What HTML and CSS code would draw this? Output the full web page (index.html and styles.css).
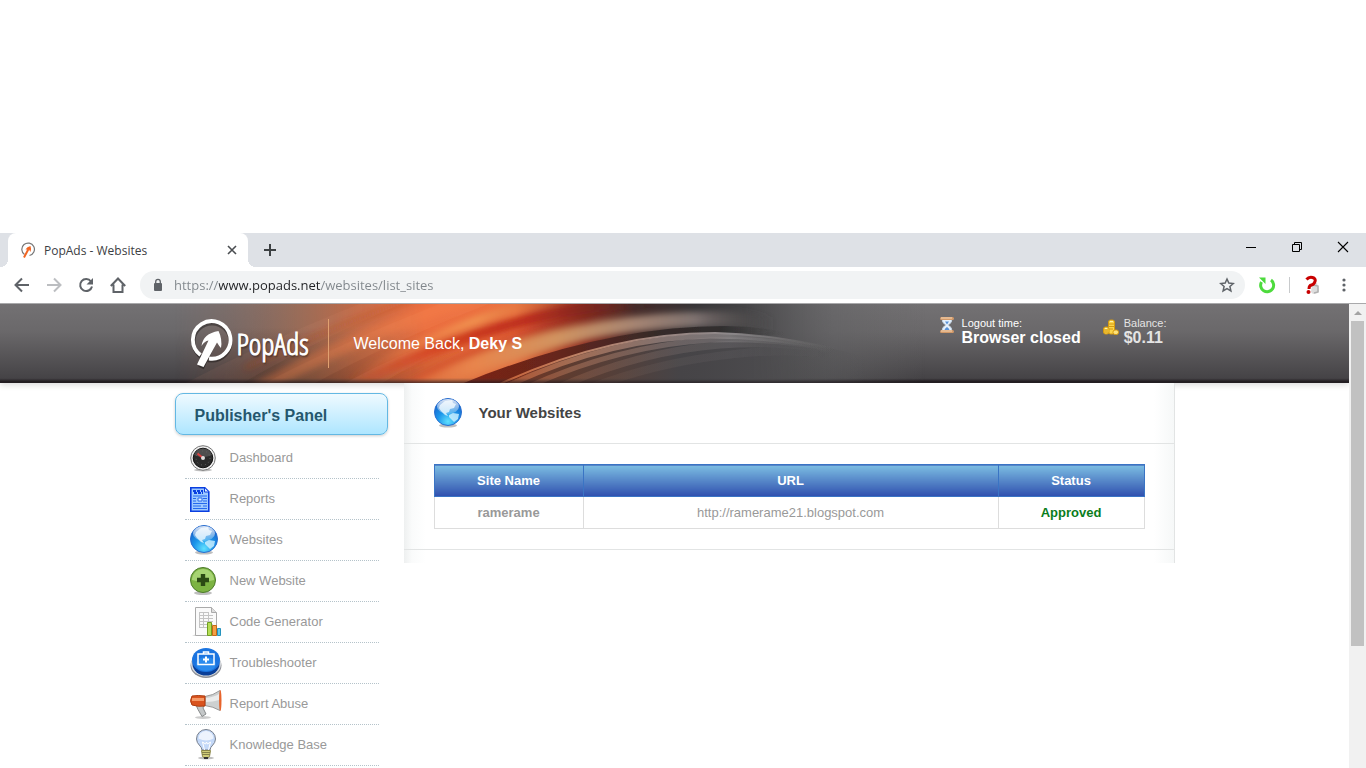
FILE: index.html
```html
<!DOCTYPE html>
<html lang="en">
<head>
  <meta charset="UTF-8" />
  <meta name="viewport" content="width=device-width, initial-scale=1" />
  <title>PopAds - Websites</title>
  <link rel="stylesheet" href="styles.css">
</head>
<body>

  <!-- Shared icon shapes -->
  <svg class="defs" width="0" height="0" aria-hidden="true">
    <defs>
      <radialGradient id="globeFill" cx="50%" cy="85%" r="85%">
        <stop offset="0" stop-color="#5fe0ff" />
        <stop offset=".45" stop-color="#1c96ea" />
        <stop offset="1" stop-color="#1558c4" />
      </radialGradient>
      <linearGradient id="globeShine" x1="0" y1="0" x2="0" y2="1">
        <stop offset="0" stop-color="#fff" stop-opacity=".85" />
        <stop offset="1" stop-color="#fff" stop-opacity=".2" />
      </linearGradient>
      <symbol id="globe" viewBox="0 0 32 32">
        <ellipse cx="14" cy="28.500" rx="9" ry="2" fill="#000" opacity=".25" />
        <circle cx="14" cy="15" r="13.500" fill="url(#globeFill)" stroke="#2a6fcf" />
        <path d="M6 8l5-4 7-1 1 3 3 1-2 4-4 1-1 3-3 1 2 3-3-1-4-4-2-3z" fill="#e4f6ff" opacity=".8" />
        <path d="M15 18l4-2 6 1-1 5-4 3-2-2-3-3z" fill="#d2f1ff" opacity=".8" />
        <ellipse cx="14" cy="9.500" rx="11" ry="7.500" fill="url(#globeShine)" />
      </symbol>
    </defs>
  </svg>

  <div class="tab-strip">
    <div class="tab">
      <svg class="favicon" viewBox="0 0 16 16" width="16" height="16" fill="none">
        <path d="M4.500 12.500a6.300 6.300 0 1 1 5 1" stroke="#777" stroke-width="1.200" />
        <path d="M4 15.500L8.500 7" stroke="#f26522" stroke-width="2" />
        <path d="M5.500 7.500q1.500-3 5-3.500 1 2.500 0 6L9 7.500z" fill="#f26522" />
      </svg>
      <span class="tab-title">PopAds - Websites</span>
      <button class="tab-close" aria-label="Close tab">
        <svg viewBox="0 0 16 16" width="16" height="16"><path d="M4 4l8 8M12 4l-8 8" stroke="#4a4d51" stroke-width="1.600" /></svg>
      </button>
    </div>
    <button class="new-tab" aria-label="New tab">
      <svg viewBox="0 0 16 16" width="16" height="16"><path d="M8 2v12M2 8h12" stroke="#3c4043" stroke-width="2" /></svg>
    </button>
    <div class="window-buttons">
      <button aria-label="Minimize"><svg viewBox="0 0 12 12" width="12" height="12"><path d="M1 6.500h10" stroke="#000" /></svg></button>
      <button aria-label="Restore"><svg viewBox="0 0 12 12" width="12" height="12" fill="none" stroke="#000"><path d="M1.500 3.500h7v7h-7zM3.500 3.500v-2h7v7h-2" /></svg></button>
      <button aria-label="Close"><svg viewBox="0 0 12 12" width="12" height="12"><path d="M1 1l10 10M11 1L1 11" stroke="#000" stroke-width="1.100" /></svg></button>
    </div>
  </div>

  <div class="toolbar">
    <button aria-label="Back"><svg viewBox="0 0 16 16" width="16" height="16" fill="none" stroke="#5f6368" stroke-width="2"><path d="M15 8H2.500M8 1.500L1.500 8 8 14.500" /></svg></button>
    <button aria-label="Forward"><svg viewBox="0 0 16 16" width="16" height="16" fill="none" stroke="#bcbec1" stroke-width="2"><path d="M1 8h12.500M8 1.500L14.500 8 8 14.500" /></svg></button>
    <button aria-label="Reload"><svg viewBox="0 0 16 16" width="16" height="16" fill="none"><path d="M13 4.500A6 6 0 1 0 14 9.500" stroke="#5f6368" stroke-width="2" /><path d="M15 1v6.500H8.500z" fill="#5f6368" /></svg></button>
    <button aria-label="Home"><svg viewBox="0 0 16 16" width="16" height="16" fill="none" stroke="#5f6368" stroke-width="2"><path d="M.8 9L8 1.500 15.200 9M3.500 7.500V15h9V7.500" /></svg></button>
    <div class="omnibox">
      <svg viewBox="0 0 12 14" width="12" height="14"><rect x="2" y="5" width="8" height="8" rx="1" fill="#5f6368" /><path d="M3.700 6V3.700a2.300 2.300 0 0 1 4.600 0V6" fill="none" stroke="#5f6368" stroke-width="1.300" /></svg>
      <input class="url" type="text" aria-label="Address" value="https://www.popads.net/websites/list_sites" />
      <button aria-label="Bookmark this page"><svg viewBox="0 0 16 16" width="16" height="16" fill="none" stroke="#5f6368" stroke-width="1.500"><path d="M8 2l1.800 4.100 4.500.4-3.400 3 1 4.400L8 11.600l-3.900 2.300 1-4.400-3.400-3 4.500-.4z" /></svg></button>
    </div>
    <button class="extension" aria-label="Refresh extension"><svg viewBox="0 0 18 18" width="18" height="18" fill="none"><path d="M3.500 6a6.500 6.500 0 1 0 9.500-2" stroke="#4ddb3d" stroke-width="3" /><path d="M1 1.500h6.500V8z" fill="#4ddb3d" /></svg></button>
    <span class="divider"></span>
    <button class="extension" aria-label="Help extension"><svg viewBox="0 0 18 20" width="18" height="20" fill="none"><path d="M9 9l5-1 2 8-1 2-5 1-2-2z" fill="#ddd" /><path d="M10 10l5 1v6l-4 1" stroke="#b0b0b0" stroke-width="1.500" /><path d="M3.500 4.500Q6 1.500 9.500 2.500t2.500 4-3.500 3.500-2.500 4" stroke="#c80000" stroke-width="3" /><circle cx="5.500" cy="17" r="2" fill="#c80000" /></svg></button>
    <button class="menu" aria-label="Menu"><svg viewBox="0 0 4 16" width="4" height="16" fill="#5f6368"><circle cx="2" cy="3" r="1.600" /><circle cx="2" cy="8" r="1.600" /><circle cx="2" cy="13" r="1.600" /></svg></button>
  </div>

  <div class="viewport">
    <div class="page">

      <header class="header">
        <div class="header-inner">
          <svg class="swoosh" viewBox="0 0 1000 79" width="1000" height="79" aria-hidden="true">
            <defs>
              <linearGradient id="warm">
                <stop offset="0" stop-color="#8a6a60" stop-opacity="0" />
                <stop offset=".05" stop-color="#8d6a5e" stop-opacity=".35" />
                <stop offset=".12" stop-color="#a56c52" stop-opacity=".75" />
                <stop offset=".18" stop-color="#c56a45" stop-opacity=".95" />
                <stop offset=".25" stop-color="#ea6c3e" />
                <stop offset=".34" stop-color="#ec7240" />
                <stop offset=".41" stop-color="#8a2c20" />
                <stop offset=".46" stop-color="#452a28" />
                <stop offset=".52" stop-color="#363436" />
                <stop offset=".57" stop-color="#454446" />
                <stop offset=".66" stop-color="#606062" stop-opacity=".5" />
                <stop offset=".75" stop-color="#666" stop-opacity="0" />
              </linearGradient>
              <linearGradient id="shade" x1="0" y1="0" x2="0" y2="1">
                <stop offset=".3" stop-color="#200800" stop-opacity="0" />
                <stop offset="1" stop-color="#200800" stop-opacity=".4" />
              </linearGradient>
              <linearGradient id="shadeFade">
                <stop offset="0" stop-color="#fff" stop-opacity="0" />
                <stop offset=".1" stop-color="#fff" />
                <stop offset=".25" stop-color="#fff" stop-opacity=".4" />
                <stop offset=".4" stop-color="#fff" stop-opacity="0" />
              </linearGradient>
              <mask id="leftMask"><rect width="1000" height="79" fill="url(#shadeFade)" /></mask>
              <linearGradient id="sand" gradientUnits="userSpaceOnUse" x1="200" y1="0" x2="600" y2="0">
                <stop offset="0" stop-color="#ef7a45" stop-opacity="0" />
                <stop offset=".25" stop-color="#e8854c" />
                <stop offset=".45" stop-color="#d2935f" />
                <stop offset=".65" stop-color="#a58472" />
                <stop offset=".8" stop-color="#7e7270" />
                <stop offset="1" stop-color="#444" stop-opacity="0" />
              </linearGradient>
              <linearGradient id="glow" gradientUnits="userSpaceOnUse" x1="180" y1="0" x2="420" y2="0">
                <stop offset="0" stop-color="#f5824a" stop-opacity="0" />
                <stop offset=".5" stop-color="#f09350" />
                <stop offset="1" stop-color="#c8552c" stop-opacity="0" />
              </linearGradient>
              <linearGradient id="redBand" gradientUnits="userSpaceOnUse" x1="160" y1="0" x2="480" y2="0">
                <stop offset="0" stop-color="#d84a28" stop-opacity="0" />
                <stop offset=".35" stop-color="#d2401f" />
                <stop offset=".6" stop-color="#bb2c1c" />
                <stop offset=".8" stop-color="#7a251d" />
                <stop offset="1" stop-color="#3a2726" stop-opacity="0" />
              </linearGradient>
              <linearGradient id="darkBand" gradientUnits="userSpaceOnUse" x1="285" y1="0" x2="610" y2="0">
                <stop offset="0" stop-color="#7d2413" />
                <stop offset=".3" stop-color="#66251c" />
                <stop offset=".6" stop-color="#362a28" />
                <stop offset=".8" stop-color="#302e2f" />
                <stop offset="1" stop-color="#444" stop-opacity="0" />
              </linearGradient>
              <linearGradient id="arc" gradientUnits="userSpaceOnUse" x1="310" y1="0" x2="660" y2="0">
                <stop offset="0" stop-color="#c8592c" />
                <stop offset=".25" stop-color="#c08264" />
                <stop offset=".5" stop-color="#9c8681" />
                <stop offset=".7" stop-color="#8d898b" />
                <stop offset="1" stop-color="#666" stop-opacity="0" />
              </linearGradient>
              <linearGradient id="under" gradientUnits="userSpaceOnUse" x1="320" y1="0" x2="690" y2="0">
                <stop offset="0" stop-color="#7d3420" />
                <stop offset=".2" stop-color="#5e3c30" />
                <stop offset=".5" stop-color="#464447" />
                <stop offset=".7" stop-color="#4c4b4e" stop-opacity=".8" />
                <stop offset="1" stop-color="#555" stop-opacity="0" />
              </linearGradient>
              <filter id="soft" filterUnits="userSpaceOnUse" x="-20" y="-60" width="1040" height="200"><feGaussianBlur stdDeviation="3" /></filter>
              <filter id="fine" filterUnits="userSpaceOnUse" x="-20" y="-60" width="1040" height="200"><feGaussianBlur stdDeviation=".7" /></filter>
            </defs>
            <rect width="1000" height="79" fill="url(#warm)" />
            <rect width="1000" height="79" fill="url(#shade)" mask="url(#leftMask)" />

            <!-- diagonal streaks on the left -->
            <g filter="url(#fine)" fill="#ffb080">
              <path d="M-10 90Q90 36 210 -10H250Q130 40 50 90z" opacity=".06" />
              <path d="M70 90Q160 40 290 -10H340Q220 34 120 90z" opacity=".08" />
              <path d="M150 90Q220 50 300 22L330 20Q240 56 190 90z" opacity=".1" />
            </g>
            <g fill="none" filter="url(#soft)">
              <path d="M70 64Q160 22 240 -6" stroke="#b23c20" stroke-width="4" opacity=".35" />
              <path d="M60 98Q190 24 300 -6" stroke="#f8824a" stroke-width="14" opacity=".35" />
              <path d="M160 86Q270 16 390 -8" stroke="url(#glow)" stroke-width="8" />
              <path d="M150 96Q290 18 450 -2" stroke="url(#redBand)" stroke-width="12" />
              <path d="M210 96Q330 20 480 2" stroke="url(#redBand)" stroke-width="8" opacity=".6" />
              <path d="M220 96Q370 16 540 15 580 15 620 26" stroke="url(#sand)" stroke-width="15" />
              <path d="M250 96Q380 24 500 18" stroke="url(#sand)" stroke-width="9" opacity=".7" />
            </g>

            <!-- dark gap and the arcs below it -->
            <path d="M272 86Q420 22 550 22 590 22 625 32 580 31 540 31 420 34 318 86z" fill="url(#darkBand)" filter="url(#fine)" />
            <path d="M318 86Q430 29 535 29 610 29 700 56L760 86z" fill="url(#under)" />
            <g fill="none" stroke="url(#arc)" filter="url(#fine)">
              <path d="M312 86Q430 29 540 29 600 30 660 46" stroke-width="2" />
              <path d="M324 86Q430 34 535 32 600 32 660 46" stroke-width="5" opacity=".7" />
              <path d="M346 86Q440 42 535 36 600 34 660 46" stroke-width="5" opacity=".45" />
              <path d="M378 86Q460 48 545 41 600 37 660 46" stroke-width="7" opacity=".22" />
              <path d="M410 86Q480 58 560 50 610 44 670 52" stroke-width="8" opacity=".1" />
            </g>
          </svg>

          <a class="logo" href="#">
            <svg viewBox="0 0 46 52" width="46" height="52" fill="none">
              <g opacity=".35" transform="translate(1 2)">
                <circle cx="22" cy="22" r="18.500" stroke="#000" stroke-width="4" />
                <path d="M11 48l10-21" stroke="#000" stroke-width="6" />
              </g>
              <path d="M11.500 37A18.800 18.800 0 1 1 20 40.500" stroke="#fff" stroke-width="3.800" />
              <path d="M8 46.500L19.500 22.500Q15.500 23 12.500 28 14 15.500 29.500 13 33.500 21 32 30 30 28 28 24.500L14.500 49z" fill="#fff" />
            </svg>
            <span>PopAds</span>
          </a>
          <p class="welcome">Welcome Back, <b>Deky S</b></p>

          <div class="stat">
            <svg viewBox="0 0 16 16" width="16" height="16">
              <path d="M3 2h10q0 4-4 6 4 2 4 6H3q0-4 4-6-4-2-4-6z" fill="#e6f1fc" stroke="#c3d3e3" />
              <path d="M6 4.500h4L8 7.500zM5 14q1-3 3-4 2 1 3 4z" fill="#5a93d8" />
              <rect x="1" y="0" width="14" height="3" rx="1.500" fill="#d39a69" />
              <rect x="1" y="13" width="14" height="3" rx="1.500" fill="#d39a69" />
              <path d="M2 1h11M2 14h11" stroke="#f6d8b8" />
            </svg>
            <p>Logout time:<b>Browser closed</b></p>
          </div>
          <div class="stat balance">
            <svg viewBox="0 0 16 16" width="16" height="16" stroke="#d59a10">
              <rect x="5.500" y="1" width="6" height="14" rx="2" fill="#fbd54a" />
              <rect x=".5" y="8" width="5.500" height="7" rx="2" fill="#fbd54a" />
              <rect x="10" y="11" width="5.500" height="4.500" rx="2" fill="#fde27a" />
              <path d="M6 5h5M6 7.500h5M6 10h4M1 11h4M1 13h4" />
              <path d="M7 2.500h3M2 9.500h2" stroke="#fff3b0" />
            </svg>
            <p>Balance:<b>$0.11</b></p>
          </div>
        </div>
      </header>

      <div class="container">
        <aside class="sidebar">
          <h2>Publisher's Panel</h2>
          <nav>
            <a href="#">
              <svg viewBox="0 0 32 32" width="32" height="32">
                <ellipse cx="13" cy="28" rx="9" ry="1.500" opacity=".25" />
                <circle cx="13" cy="16" r="12.300" fill="#eee" stroke="#777" />
                <circle cx="13" cy="16" r="9.800" fill="#2b2b2b" stroke="#111" />
                <path d="M4 13a9.500 9.500 0 0 1 18 0q-9 4-18 0z" fill="#666" opacity=".6" />
                <circle cx="13" cy="16" r="7" fill="none" stroke="#666" stroke-dasharray="1 3" />
                <path d="M7.500 11.500l6 5" stroke="#e04040" stroke-width="2" />
                <circle cx="13" cy="16" r="2" fill="#ddd" />
              </svg>
              <span>Dashboard</span>
            </a>
            <a href="#">
              <svg viewBox="0 0 32 32" width="32" height="32" fill="none" stroke="#0a3fe0">
                <path d="M.8 4.800h14l4 4v19.500H.8z" fill="#9ec9ff" stroke-width="1.600" />
                <path d="M14.500 5v4h4" fill="#e7f2ff" />
                <path d="M3 8h10M4 10h9" stroke-width="2" stroke-dasharray="3 1" />
                <path d="M3 13h14M3 15.500h3M13 15.500h4M3 18h3M13 18h4M3 20.500h14M3 23h8M13 23h4M3 25.500h14" stroke="#2468ee" />
                <path d="M8 15h4v3H8z" fill="#e7f2ff" stroke="#2468ee" />
              </svg>
              <span>Reports</span>
            </a>
            <a href="#">
              <svg viewBox="0 0 32 32" width="32" height="32"><use href="#globe" /></svg>
              <span>Websites</span>
            </a>
            <a href="#">
              <svg viewBox="0 0 32 32" width="32" height="32">
                <ellipse cx="13" cy="28" rx="9" ry="2" opacity=".25" />
                <circle cx="13" cy="15" r="12.500" fill="#7cb342" stroke="#4c7a2a" />
                <path d="M2 15a11 11 0 0 1 22 0q-11 3-22 0z" fill="#b5df84" opacity=".75" />
                <path d="M13 9v12M7 15h12" stroke="#2b4a14" stroke-width="4.400" />
              </svg>
              <span>New Website</span>
            </a>
            <a href="#">
              <svg viewBox="0 0 32 32" width="32" height="32">
                <path d="M2 30l4-2h20l3 2z" opacity=".15" />
                <path d="M5.500 1.500h16l5 5v23h-21z" fill="#fafafa" stroke="#aaa" />
                <path d="M21.500 1.500v5h5" fill="#ddd" stroke="#aaa" />
                <path d="M9 6.500h10M9 9.500h14M9 12.500h14M9 15.500h14M9 18.500h14M9 21.500h9M9.500 6v16M13.500 6v16M18.500 6v16" stroke="#c4c4c4" fill="none" />
                <path d="M17.500 16.500h4v13h-4z" fill="#b5dd55" stroke="#6fa022" />
                <path d="M22.500 19.500h4v10h-4z" fill="#f5a045" stroke="#c46a18" />
                <path d="M27.500 22.500h3v7h-3z" fill="#62cbee" stroke="#2593bd" />
              </svg>
              <span>Code Generator</span>
            </a>
            <a href="#">
              <svg viewBox="0 0 32 32" width="32" height="32" fill="none">
                <ellipse cx="16" cy="18.500" rx="15.500" ry="12.500" fill="#8c8f96" />
                <ellipse cx="16" cy="17" rx="15" ry="12.500" fill="#d8dbe0" />
                <ellipse cx="16" cy="17" rx="13.500" ry="11.500" fill="#0a3f98" />
                <ellipse cx="16" cy="13" rx="14" ry="12" fill="#1b74e0" />
                <ellipse cx="16" cy="17" rx="10" ry="7" fill="#359af5" opacity=".6" />
                <path d="M8 7h16v10.500H8z" stroke="#fff" stroke-width="1.500" />
                <path d="M13.500 7V5h5v2" stroke="#fff" stroke-width="1.500" />
                <path d="M16 9.500v6M13 12.500h6" stroke="#fff" stroke-width="2" />
              </svg>
              <span>Troubleshooter</span>
            </a>
            <a href="#">
              <svg viewBox="0 0 32 32" width="32" height="32">
                <ellipse cx="13" cy="29.500" rx="8" ry="1.500" opacity=".2" />
                <path d="M6 17h8l-1 3 3 6-4 2.500-4-7z" fill="#c4c7c8" stroke="#888b8c" />
                <path d="M15 8.500q8-1 15-6v20q-7-4-15-5z" fill="#cdd0d0" stroke="#999" />
                <path d="M16 10q8-1 13-4v6q-6 2-13 2z" fill="#fff" opacity=".6" />
                <path d="M2 8q6-1 13 0v10q-7 1-13-1-3-4 0-9z" fill="#d9531e" stroke="#ad3d10" />
                <path d="M2 10h12v3H2z" fill="#f59a68" />
                <ellipse cx="30.300" cy="12.500" rx="1.200" ry="10.500" fill="#e8642c" />
              </svg>
              <span>Report Abuse</span>
            </a>
            <a href="#">
              <svg viewBox="0 0 32 32" width="32" height="32">
                <ellipse cx="16" cy="29" rx="8" ry="1.500" opacity=".25" />
                <path d="M12 21c0-4-5.500-5.500-5.500-11a9.500 9.500 0 0 1 19 0C25.500 15.500 20 17 20 21z" fill="#c3d8f8" stroke="#777f8c" />
                <path d="M8.500 9.500a7.500 7.500 0 0 1 15 0q-7 4-15 0z" fill="#fff" opacity=".7" />
                <path d="M14.500 21l-2-8 3 2 1-2 1 2 3-2-2 8" fill="none" stroke="#fff" />
                <path d="M11.500 21.500h9l-1 6-2 1.500h-3l-2-1.500z" fill="#d0cd78" stroke="#8a8648" />
                <path d="M12 23.500h8M12 25.500h8" stroke="#85814a" />
                <path d="M14 29h4" stroke="#333" stroke-width="2" />
              </svg>
              <span>Knowledge Base</span>
            </a>
          </nav>
        </aside>

        <main class="content">
          <div class="content-title">
            <svg viewBox="0 0 32 32" width="32" height="32"><use href="#globe" /></svg>
            <h1>Your Websites</h1>
          </div>
          <div class="content-body">
            <table>
              <thead>
                <tr><th class="col-name">Site Name</th><th>URL</th><th class="col-status">Status</th></tr>
              </thead>
              <tbody>
                <tr><td class="site-name">ramerame</td><td>http://ramerame21.blogspot.com</td><td class="approved">Approved</td></tr>
              </tbody>
            </table>
          </div>
        </main>
      </div>
    </div>

    <div class="scrollbar">
      <svg viewBox="0 0 17 17" width="17" height="17"><path d="M5 11l4-4 4 4z" fill="#a3a3a3" /></svg>
      <div class="thumb"></div>
    </div>
  </div>

</body>
</html>
```
FILE: styles.css
```css
* {
  box-sizing: border-box;
}

body {
  margin: 0;
  padding-top: 233px;
  height: 100vh;
  overflow: hidden;
  display: flex;
  flex-direction: column;
  background-color: #fff;
  color: #999;
  font-family: Arial, "Liberation Sans", sans-serif;
  font-size: 13px;
}

h1, h2, p {
  margin: 0;
}

button {
  display: flex;
  align-items: center;
  justify-content: center;
  padding: 0;
  border: none;
  background: none;
  cursor: pointer;
}

a {
  color: inherit;
  text-decoration: none;
}

svg {
  flex: none;
}

.defs {
  position: absolute;
}

/* Browser tab strip */
.tab-strip {
  display: flex;
  flex: none;
  height: 34px;
  padding-left: 8px;
  background-color: #dee1e6;
}

.tab {
  position: relative;
  display: flex;
  align-items: center;
  gap: 8px;
  width: 240px;
  padding: 0 8px 0 12px;
  border-radius: 8px 8px 0 0;
  background-color: #fff;
  color: #3c4043;
  font-family: "Segoe UI", "Open Sans", sans-serif;
  font-size: 12px;
}

.tab::before,
.tab::after {
  content: "";
  position: absolute;
  bottom: 0;
  width: 8px;
  height: 8px;
}

.tab::before {
  left: -8px;
  background: radial-gradient(circle at 0 0, transparent 8px, #fff 8px);
}

.tab::after {
  right: -8px;
  background: radial-gradient(circle at 100% 0, transparent 8px, #fff 8px);
}

.tab-title {
  flex: 1;
}

.new-tab {
  width: 28px;
  margin-left: 8px;
}

.window-buttons {
  display: flex;
  height: 28px;
  margin-left: auto;
}

.window-buttons button {
  width: 46px;
}

/* Browser toolbar */
.toolbar {
  display: flex;
  flex: none;
  align-items: center;
  height: 37px;
  padding: 0 6px;
  border-bottom: 1px solid #a9a9ab;
}

.toolbar button {
  width: 32px;
  height: 28px;
}

.omnibox {
  display: flex;
  flex: 1;
  align-items: center;
  gap: 10px;
  height: 28px;
  margin: 0 6px;
  padding: 0 2px 0 12px;
  border-radius: 14px;
  background-color: #f1f3f4;
}

.url {
  flex: 1;
  padding: 0;
  border: none;
  outline: none;
  /* host name is darker than the rest of the address */
  background: linear-gradient(90deg, #80868b 45px, #202124 45px, #202124 147px, #80868b 147px);
  -webkit-background-clip: text;
  background-clip: text;
  color: transparent;
  font-family: "Segoe UI", "Open Sans", sans-serif;
  font-size: 13px;
}

.divider {
  width: 1px;
  height: 16px;
  margin: 0 6px;
  background-color: #c8cacc;
}

/* Page area */
.viewport {
  display: flex;
  flex: 1;
  min-height: 0;
}

.page {
  flex: 1;
  min-width: 0;
  overflow: hidden;
}

.header {
  background: linear-gradient(#737173, #6a686a 35%, #454346 94%, #231e22 98%);
  box-shadow: 0 2px 6px rgba(0, 0, 0, 0.15);
  color: #fff;
}

.header-inner {
  position: relative;
  display: flex;
  align-items: flex-start;
  max-width: 1000px;
  height: 79px;
  margin: 0 auto;
}

.swoosh {
  position: absolute;
  top: 0;
  left: 0;
  -webkit-mask-image: linear-gradient(#000 74px, rgba(0, 0, 0, 0.3));
  mask-image: linear-gradient(#000 74px, rgba(0, 0, 0, 0.3));
}

.logo,
.welcome,
.stat {
  position: relative;
}

.logo {
  display: flex;
  align-items: center;
  gap: 2px;
  width: 154px;
  height: 49px;
  margin-top: 15px;
  padding-left: 14px;
  border-right: 1px solid #e0a070;
  font-family: "Open Sans Condensed Light", "Open Sans Condensed", "Open Sans", sans-serif;
  font-size: 30px;
  font-weight: 300;
  text-shadow: 1px 2px 2px rgba(0, 0, 0, 0.5);
  -webkit-text-stroke: 1px #fff;
}

.welcome {
  flex: 1;
  padding: 31px 0 0 25px;
  font-size: 16px;
}

.stat {
  display: flex;
  gap: 7px;
  padding: 13px 0 0;
  font-size: 11px;
  line-height: 13px;
}

.stat b {
  display: block;
  font-size: 16px;
  line-height: 16px;
}

.balance {
  gap: 5px;
  margin: 0 8px 0 22px;
  color: #e4e4e4;
}

.balance svg {
  margin-top: 2px;
}

.container {
  display: flex;
  align-items: flex-start;
  gap: 16px;
  max-width: 1000px;
  margin: 0 auto;
}

/* Sidebar */
.sidebar {
  width: 213px;
  padding-top: 10px;
}

.sidebar h2 {
  height: 42px;
  padding-left: 19px;
  border: 1px solid #63b8e3;
  border-radius: 8px;
  background: linear-gradient(#effaff, #aee6ff);
  box-shadow: 0 1px 3px rgba(0, 0, 0, 0.2);
  color: #25576e;
  font-size: 16px;
  line-height: 43px;
}

.sidebar nav {
  padding: 3px 9px 0 10px;
}

.sidebar nav a {
  display: flex;
  align-items: center;
  gap: 8px;
  height: 41px;
  padding-left: 5px;
  border-bottom: 1px dotted #b5c3ca;
}

.sidebar nav span {
  padding-bottom: 2px;
}

.sidebar nav a:hover {
  color: #25576e;
}

/* Content */
.content {
  flex: 1;
  padding-bottom: 13px;
  border-right: 1px solid #e2e4e4;
  background: linear-gradient(90deg, #eef0f0, #fafbfb 8px, #fff 22px, #fff calc(100% - 20px), #f6f8f8);
}

.content-title {
  display: flex;
  align-items: center;
  gap: 13px;
  height: 61px;
  padding-left: 30px;
  border-bottom: 1px solid #e2e4e4;
  color: #444;
}

.content-title h1 {
  padding-bottom: 2px;
  font-size: 15px;
}

.content-body {
  padding: 20px 29px 20px 30px;
  border-bottom: 1px solid #e2e4e4;
}

table {
  width: 100%;
  border-collapse: collapse;
  table-layout: fixed;
  background-color: #fff;
  text-align: center;
}

th {
  height: 32px;
  padding: 0;
  border: 1px solid #3a74c4;
  background: linear-gradient(#7cbde2, #2f4fae);
  color: #fff;
}

td {
  height: 32px;
  padding: 0;
  border: 1px solid #ddd;
}

.col-name {
  width: 21%;
}

.col-status {
  width: 146px;
}

.site-name {
  font-weight: bold;
}

.approved {
  color: #0a7d1c;
  font-weight: bold;
}

/* Scrollbar */
.scrollbar {
  display: flex;
  flex-direction: column;
  width: 17px;
  background-color: #f1f1f1;
}

.thumb {
  height: 70%;
  margin: 0 2px;
  background-color: #c1c1c1;
}
```
